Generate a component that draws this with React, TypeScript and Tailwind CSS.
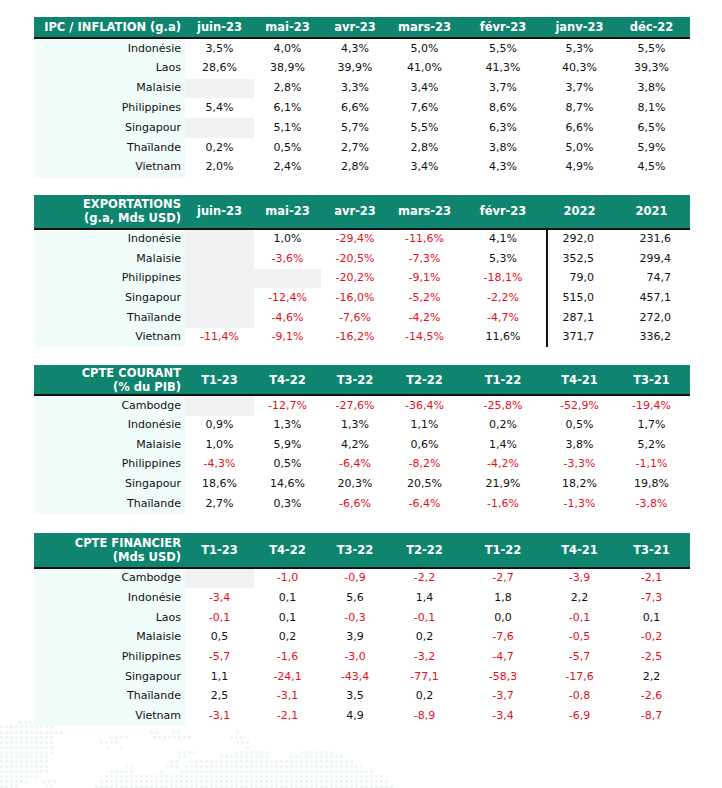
import type { ReactNode } from 'react';

type Cell = string | null;

type TableDef = {
  title: string[];
  headerH: string;
  mt: string;
  rowH: string;
  cols: string[];
  rows: [string, Cell[]][];
  divider?: boolean;
};

const GRID = 'grid grid-cols-[151px_69px_67px_68px_71px_86px_67px_77px]';

const TABLES: TableDef[] = [
  {
    title: ['IPC / INFLATION (g.a)'],
    headerH: 'h-[20px]',
    mt: 'mt-[17px]',
    rowH: 'h-[19.8px]',
    cols: ['juin-23', 'mai-23', 'avr-23', 'mars-23', 'févr-23', 'janv-23', 'déc-22'],
    rows: [
      ['Indonésie', ['3,5%', '4,0%', '4,3%', '5,0%', '5,5%', '5,3%', '5,5%']],
      ['Laos', ['28,6%', '38,9%', '39,9%', '41,0%', '41,3%', '40,3%', '39,3%']],
      ['Malaisie', [null, '2,8%', '3,3%', '3,4%', '3,7%', '3,7%', '3,8%']],
      ['Philippines', ['5,4%', '6,1%', '6,6%', '7,6%', '8,6%', '8,7%', '8,1%']],
      ['Singapour', [null, '5,1%', '5,7%', '5,5%', '6,3%', '6,6%', '6,5%']],
      ['Thaïlande', ['0,2%', '0,5%', '2,7%', '2,8%', '3,8%', '5,0%', '5,9%']],
      ['Vietnam', ['2,0%', '2,4%', '2,8%', '3,4%', '4,3%', '4,9%', '4,5%']],
    ],
  },
  {
    title: ['EXPORTATIONS', '(g.a, Mds USD)'],
    headerH: 'h-[33px]',
    mt: 'mt-[17px]',
    rowH: 'h-[19.6px]',
    cols: ['juin-23', 'mai-23', 'avr-23', 'mars-23', 'févr-23', '2022', '2021'],
    divider: true,
    rows: [
      ['Indonésie', [null, '1,0%', '-29,4%', '-11,6%', '4,1%', '292,0', '231,6']],
      ['Malaisie', [null, '-3,6%', '-20,5%', '-7,3%', '5,3%', '352,5', '299,4']],
      ['Philippines', [null, null, '-20,2%', '-9,1%', '-18,1%', '79,0', '74,7']],
      ['Singapour', [null, '-12,4%', '-16,0%', '-5,2%', '-2,2%', '515,0', '457,1']],
      ['Thaïlande', [null, '-4,6%', '-7,6%', '-4,2%', '-4,7%', '287,1', '272,0']],
      ['Vietnam', ['-11,4%', '-9,1%', '-16,2%', '-14,5%', '11,6%', '371,7', '336,2']],
    ],
  },
  {
    title: ['CPTE COURANT', '(% du PIB)'],
    headerH: 'h-[29px]',
    mt: 'mt-[18px]',
    rowH: 'h-[19.6px]',
    cols: ['T1-23', 'T4-22', 'T3-22', 'T2-22', 'T1-22', 'T4-21', 'T3-21'],
    rows: [
      ['Cambodge', [null, '-12,7%', '-27,6%', '-36,4%', '-25,8%', '-52,9%', '-19,4%']],
      ['Indonésie', ['0,9%', '1,3%', '1,3%', '1,1%', '0,2%', '0,5%', '1,7%']],
      ['Malaisie', ['1,0%', '5,9%', '4,2%', '0,6%', '1,4%', '3,8%', '5,2%']],
      ['Philippines', ['-4,3%', '0,5%', '-6,4%', '-8,2%', '-4,2%', '-3,3%', '-1,1%']],
      ['Singapour', ['18,6%', '14,6%', '20,3%', '20,5%', '21,9%', '18,2%', '19,8%']],
      ['Thaïlande', ['2,7%', '0,3%', '-6,6%', '-6,4%', '-1,6%', '-1,3%', '-3,8%']],
    ],
  },
  {
    title: ['CPTE FINANCIER', '(Mds USD)'],
    headerH: 'h-[34px]',
    mt: 'mt-[19px]',
    rowH: 'h-[19.7px]',
    cols: ['T1-23', 'T4-22', 'T3-22', 'T2-22', 'T1-22', 'T4-21', 'T3-21'],
    rows: [
      ['Cambodge', [null, '-1,0', '-0,9', '-2,2', '-2,7', '-3,9', '-2,1']],
      ['Indonésie', ['-3,4', '0,1', '5,6', '1,4', '1,8', '2,2', '-7,3']],
      ['Laos', ['-0,1', '0,1', '-0,3', '-0,1', '0,0', '-0,1', '0,1']],
      ['Malaisie', ['0,5', '0,2', '3,9', '0,2', '-7,6', '-0,5', '-0,2']],
      ['Philippines', ['-5,7', '-1,6', '-3,0', '-3,2', '-4,7', '-5,7', '-2,5']],
      ['Singapour', ['1,1', '-24,1', '-43,4', '-77,1', '-58,3', '-17,6', '2,2']],
      ['Thaïlande', ['2,5', '-3,1', '3,5', '0,2', '-3,7', '-0,8', '-2,6']],
      ['Vietnam', ['-3,1', '-2,1', '4,9', '-8,9', '-3,4', '-6,9', '-8,7']],
    ],
  },
];

// dotted world map in the bottom-left corner: [y, x start, x end]
const MAP_ROWS: [number, number, number][] = [
  [3, 19, 50],
  [7, 0, 50],
  [13, 0, 63], [13, 150, 156], [13, 172, 180], [13, 236, 238],
  [18, 0, 53], [18, 110, 125], [18, 153, 190], [18, 230, 243],
  [23, 0, 50], [23, 100, 117], [23, 236, 250],
  [28, 0, 50], [28, 106, 110], [28, 120, 121], [28, 246, 250],
  [33, 0, 50], [33, 178, 195], [33, 235, 268], [33, 300, 330],
  [37, 0, 45], [37, 178, 185], [37, 220, 265], [37, 290, 340],
  [42, 0, 45], [42, 170, 175], [42, 190, 350],
  [47, 0, 45], [47, 125, 132], [47, 165, 175], [47, 185, 360],
  [52, 0, 45], [52, 110, 130], [52, 160, 161], [52, 180, 370],
  [57, 0, 35], [57, 105, 380],
  [62, 0, 25], [62, 43, 55], [62, 100, 385],
  [67, 0, 15], [67, 45, 50], [67, 95, 390],
];

function DotMap() {
  const dots: ReactNode[] = [];
  MAP_ROWS.forEach(([y, a, b], i) => {
    for (let x = a; x <= b; x += 5) {
      dots.push(<rect key={`${i}-${x}`} x={x} y={y} width={3} height={3} rx={0.6} fill="#eef7f6" />);
    }
  });
  return (
    <svg className="absolute bottom-0 left-0" width="400" height="70" viewBox="0 0 400 70">
      {dots}
    </svg>
  );
}

function Table({ t }: { t: TableDef }) {
  return (
    <div className={`relative w-[656px] ${t.mt}`}>
      <div className={`${GRID} ${t.headerH} bg-[#0f846f] font-bold text-[11.5px] leading-[14px] text-white`}>
        <div className="flex flex-col items-end justify-center pr-[4px] text-right">
          {t.title.map((l) => (
            <span key={l}>{l}</span>
          ))}
        </div>
        {t.cols.map((c) => (
          <div key={c} className="flex items-center justify-center">
            {c}
          </div>
        ))}
      </div>
      <div className="h-[2px] bg-[#111]" />
      {t.rows.map(([label, cells]) => (
        <div key={label} className={`${GRID} ${t.rowH} text-[11px] text-[#111]`}>
          <div className="flex items-center justify-end bg-[#effcf9] pr-[4px]">{label}</div>
          {cells.map((v, i) => {
            const yearCol = t.divider && i >= 5;
            return (
              <div
                key={i}
                className={[
                  'flex items-center',
                  yearCol ? 'justify-end pr-[19px]' : 'justify-center',
                  t.divider && i === 5 ? 'border-l-2 border-[#111]' : '',
                  v === null ? 'bg-[#f2f2f2]' : '',
                  v && v.startsWith('-') ? 'text-[#e3101e]' : '',
                ].join(' ')}
              >
                {v}
              </div>
            );
          })}
        </div>
      ))}
    </div>
  );
}

export default function App() {
  return (
    <div
      className="relative h-[788px] w-[722px] overflow-hidden bg-white pl-[34px]"
      style={{ fontFamily: '"DejaVu Sans", Verdana, sans-serif' }}
    >
      <DotMap />
      <div className="relative">
        {TABLES.map((t) => (
          <Table key={t.title[0]} t={t} />
        ))}
      </div>
    </div>
  );
}
